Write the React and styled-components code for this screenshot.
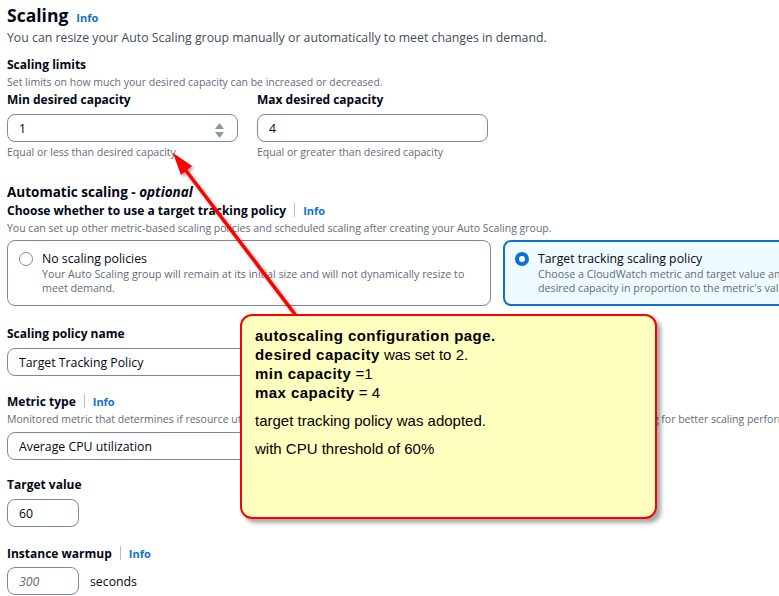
import React from 'react'
import styled, { createGlobalStyle } from 'styled-components'

const GlobalStyle = createGlobalStyle`
  html, body {
    margin: 0;
    padding: 0;
    background: #ffffff;
  }
  body {
    font-family: 'Open Sans', 'Noto Sans', Arial, sans-serif;
    color: #000716;
    overflow: hidden;
  }
`

const Page = styled.div`
  position: relative;
  width: 779px;
  height: 596px;
  overflow: hidden;
`

const Content = styled.div`
  width: 980px;
  padding: 4px 0 0 7px;
  display: flex;
  flex-direction: column;
`

const Title = styled.h2`
  margin: 0;
  font-size: 17.5px;
  line-height: 22px;
  font-weight: 700;
  display: flex;
  align-items: baseline;
  gap: 8px;
`

const Info = styled.span`
  color: #0972d3;
  font-size: 11px;
  font-weight: 700;
`

const Divider = styled.span`
  display: inline-block;
  width: 1px;
  height: 14px;
  background: #b6bec9;
  margin: 0 8px 0 8px;
  vertical-align: -2px;
`

const Lead = styled.p`
  margin: 0;
  font-size: 12.3px;
  line-height: 18px;
  color: #414d5c;
`

const Section = styled.div`
  display: flex;
  flex-direction: column;
  margin-top: ${p => p.$gap || 18}px;
`

const Heading = styled.div`
  font-size: ${p => (p.$big ? 13.5 : 12)}px;
  line-height: ${p => (p.$big ? 20 : 18)}px;
  font-weight: 700;
`

const Hint = styled.div`
  font-size: 10.5px;
  line-height: 16px;
  color: #5f6b7a;
  white-space: nowrap;
  margin-top: ${p => p.$top || 0}px;
`

const Row = styled.div`
  display: flex;
  gap: 19px;
  margin-top: 1px;
`

const Field = styled.div`
  display: flex;
  flex-direction: column;
  width: ${p => p.$w || 231}px;
`

const InputBox = styled.div`
  position: relative;
  margin-top: 5px;
  height: 28px;
  width: ${p => p.$w ? p.$w + 'px' : '100%'};
  box-sizing: border-box;
  border: 1px solid #7d8998;
  border-radius: 8px;
  display: flex;
  align-items: center;
  padding: 0 11px;
  font-size: 12.3px;
  color: ${p => (p.$placeholder ? '#5f6b7a' : '#000716')};
  font-style: ${p => (p.$placeholder ? 'italic' : 'normal')};
  background: #fff;
`

const Spinner = styled.div`
  position: absolute;
  right: 13px;
  top: 8px;
  display: flex;
  flex-direction: column;
  gap: 3px;
`

const Inline = styled.div`
  display: flex;
  align-items: center;
  gap: 11px;
  margin-top: 4px;
  font-size: 12.3px;
  ${InputBox} {
    margin-top: 0;
  }
`

const Cards = styled.div`
  display: grid;
  grid-template-columns: 484px 484px;
  gap: 12px;
  margin-top: 4px;
`

const Card = styled.div`
  box-sizing: border-box;
  height: 66px;
  border: ${p => (p.$on ? '2px solid #0972d3' : '1px solid #7d8998')};
  background: ${p => (p.$on ? '#f0fbff' : '#fff')};
  border-radius: 8px;
  display: flex;
  gap: 9px;
  padding: ${p => (p.$on ? '8px 12px 0 10px' : '9px 12px 0 11px')};
`

const Radio = styled.span`
  flex: none;
  box-sizing: border-box;
  width: 14px;
  height: 14px;
  margin-top: 2px;
  border-radius: 50%;
  border: ${p => (p.$on ? '4px solid #0972d3' : '1px solid #7d8998')};
  background: #fff;
`

const CardTitle = styled.div`
  font-size: 12.3px;
  line-height: 17px;
`

const CardText = styled.div`
  font-size: 10.7px;
  line-height: 14px;
  color: #5f6b7a;
`

const Callout = styled.div`
  position: absolute;
  left: 240px;
  top: 314px;
  width: 417px;
  height: 205px;
  box-sizing: border-box;
  background: #ffffc0;
  border: 2px solid #ff0000;
  border-radius: 12px;
  box-shadow: 4px 4px 4px rgba(0, 0, 0, 0.35);
  padding: 10px 13px;
  font-family: 'Liberation Sans', Arial, sans-serif;
  font-size: 15px;
  line-height: 19px;
  color: #000;
  p {
    margin: 0 0 9px;
  }
  b {
    letter-spacing: 0.45px;
  }
`

const ArrowLayer = styled.svg`
  position: absolute;
  left: 0;
  top: 0;
  pointer-events: none;
`

function Arrow() {
  return (
    <ArrowLayer width="779" height="596">
      <defs>
        <filter id="sh" x="-20%" y="-20%" width="140%" height="140%">
          <feDropShadow dx="2" dy="2" stdDeviation="1.5" floodColor="#000" floodOpacity="0.35" />
        </filter>
      </defs>
      <g filter="url(#sh)">
        <line x1="297" y1="317" x2="184" y2="168" stroke="#ff0000" strokeWidth="3.5" />
        <polygon points="173,153 192,166 181,175" fill="#ff0000" />
      </g>
    </ArrowLayer>
  )
}

function UpDown() {
  return (
    <Spinner>
      <svg width="9" height="6" viewBox="0 0 9 6"><path d="M4.5 0L9 6H0z" fill="#8c96a3" /></svg>
      <svg width="9" height="6" viewBox="0 0 9 6"><path d="M0 0h9L4.5 6z" fill="#8c96a3" /></svg>
    </Spinner>
  )
}

export default function App() {
  return (
    <Page>
      <GlobalStyle />
      <Content>
        <Title>Scaling <Info>Info</Info></Title>
        <Lead>You can resize your Auto Scaling group manually or automatically to meet changes in demand.</Lead>

        <Section $gap={9}>
          <Heading>Scaling limits</Heading>
          <Hint>Set limits on how much your desired capacity can be increased or decreased.</Hint>
          <Row>
            <Field>
              <Heading>Min desired capacity</Heading>
              <InputBox>1<UpDown /></InputBox>
              <Hint $top={2}>Equal or less than desired capacity</Hint>
            </Field>
            <Field>
              <Heading>Max desired capacity</Heading>
              <InputBox>4</InputBox>
              <Hint $top={2}>Equal or greater than desired capacity</Hint>
            </Field>
          </Row>
        </Section>

        <Section $gap={22}>
          <Heading $big>Automatic scaling - <i>optional</i></Heading>
          <Heading>Choose whether to use a target tracking policy<Divider /><Info>Info</Info></Heading>
          <Hint>You can set up other metric-based scaling policies and scheduled scaling after creating your Auto Scaling group.</Hint>
          <Cards>
            <Card>
              <Radio />
              <div>
                <CardTitle>No scaling policies</CardTitle>
                <CardText>Your Auto Scaling group will remain at its initial size and will not dynamically resize to meet demand.</CardText>
              </div>
            </Card>
            <Card $on>
              <Radio $on />
              <div>
                <CardTitle>Target tracking scaling policy</CardTitle>
                <CardText>Choose a CloudWatch metric and target value and let the scaling policy adjust the desired capacity in proportion to the metric's value.</CardText>
              </div>
            </Card>
          </Cards>
        </Section>

        <Section $gap={19}>
          <Heading>Scaling policy name</Heading>
          <InputBox $w={484}>Target Tracking Policy</InputBox>
        </Section>

        <Section $gap={17}>
          <Heading>Metric type<Divider /><Info>Info</Info></Heading>
          <Hint>Monitored metric that determines if resource utilization is too low or high. If using EC2 metrics, consider enabling detailed monitoring for better scaling performance.</Hint>
          <InputBox $w={484}>Average CPU utilization</InputBox>
        </Section>

        <Section $gap={16}>
          <Heading>Target value</Heading>
          <InputBox $w={72}>60</InputBox>
        </Section>

        <Section $gap={18}>
          <Heading>Instance warmup<Divider /><Info>Info</Info></Heading>
          <Inline>
            <InputBox $w={72} $placeholder>300</InputBox>
            seconds
          </Inline>
        </Section>
      </Content>

      <Arrow />
      <Callout>
        <p>
          <b>autoscaling configuration page.</b><br />
          <b>desired capacity</b> was set to 2.<br />
          <b>min capacity</b> =1<br />
          <b>max capacity</b> = 4
        </p>
        <p>target tracking policy was adopted.</p>
        <p>with CPU threshold of 60%</p>
      </Callout>
    </Page>
  )
}
